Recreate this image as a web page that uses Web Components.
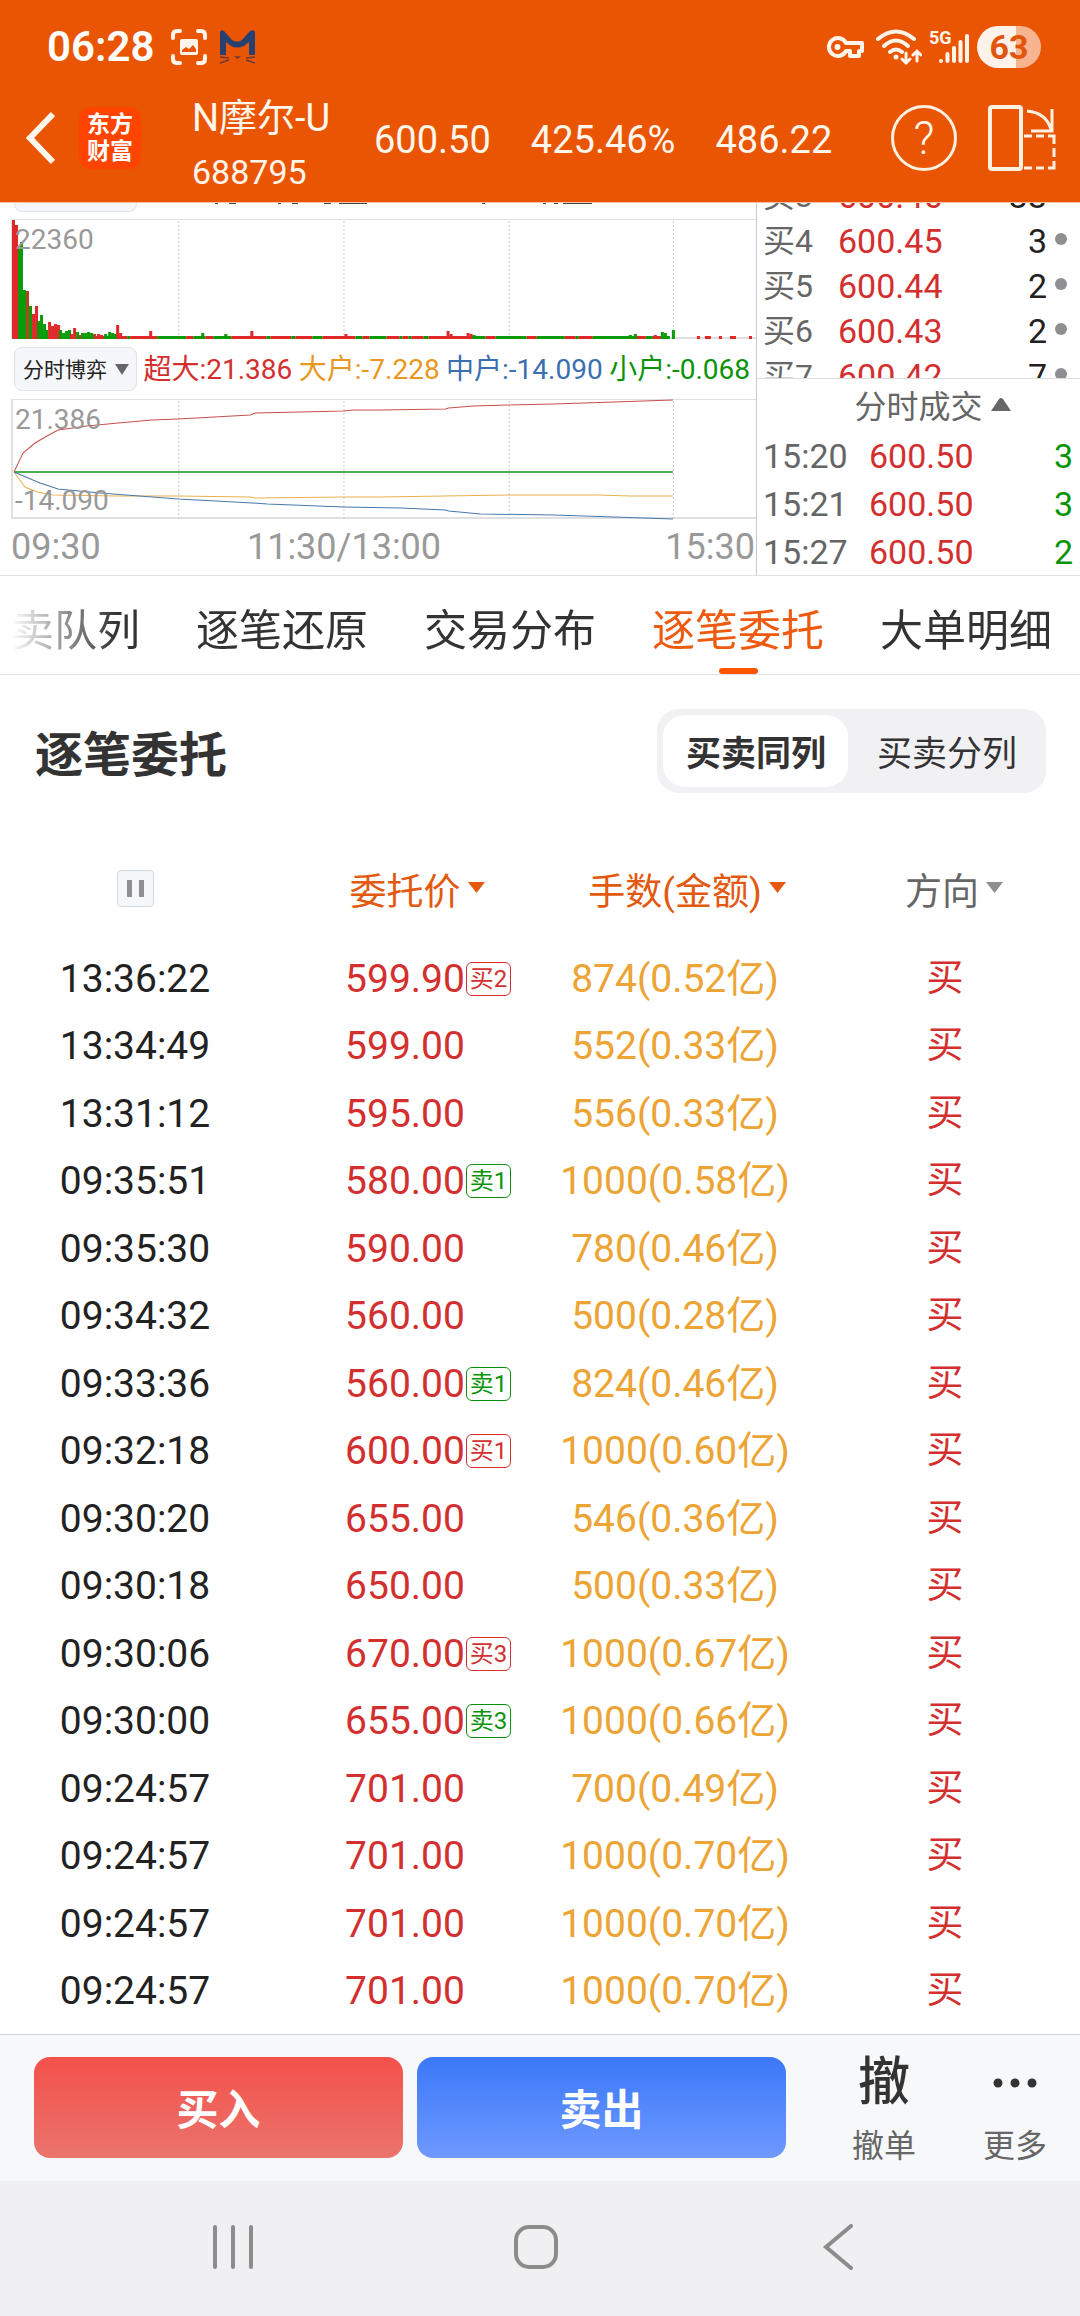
<!DOCTYPE html>
<html lang="zh-CN">
<head>
<meta charset="utf-8">
<meta name="viewport" content="width=device-width, initial-scale=1">
<title>N摩尔-U 688795</title>
<style>
    html, body {
        margin: 0;
    }
    body {
        min-height: 100vh;
        display: flex;
        flex-direction: column;
        background: #fff;
        color: #222;
        font-family: Roboto, "Noto Sans CJK SC", sans-serif;
    }
    order-table {
        flex: 1;
    }
</style>
</head>
<body>
<status-bar time="06:28" battery="63"></status-bar>
<stock-header code="688795">
    N摩尔-U
    <span slot="stats">600.50</span>
    <span slot="stats">425.46%</span>
    <span slot="stats">486.22</span>
</stock-header>
<quote-panel>
    <minute-chart slot="left"></minute-chart>
    <order-book slot="right"></order-book>
</quote-panel>
<tab-strip>
    <tab-item>买卖队列</tab-item>
    <tab-item>逐笔还原</tab-item>
    <tab-item>交易分布</tab-item>
    <tab-item active>逐笔委托</tab-item>
    <tab-item>大单明细</tab-item>
</tab-strip>
<section-head>
    逐笔委托
    <segment-switch slot="action"></segment-switch>
</section-head>
<order-table></order-table>
<trade-bar></trade-bar>
<system-nav></system-nav>

<script>
const RED = "#d32f2f"
const GREEN = "#0a930a"

class BaseElement extends HTMLElement {
    constructor() {
        super()
        this.attachShadow({ mode: 'open' })
        const template = document.createElement('template')
        template.innerHTML = this.render()
        this.shadowRoot.appendChild(template.content.cloneNode(true))
    }
    attr(name) {
        return this.getAttribute(name) || ""
    }
}

class StatusBar extends BaseElement {
    render() {
        return `
            <style>
            :host {
                display: flex;
                align-items: center;
                height: 94px;
                padding: 0 39px 0 47px;
                background: #ea5504;
                color: #fff4ea;
            }
            .time {
                font-size: 42px;
                font-weight: 600;
                line-height: 48px;
                color: #fff;
                margin-right: 17px;
            }
            .shot { margin-right: 12px; }
            .right {
                display: flex;
                align-items: center;
                margin-left: auto;
            }
            .key { margin-right: 12px; }
            .wifi { margin-right: 7px; }
            .signal {
                display: grid;
                width: 40px;
                height: 36px;
                margin-right: 8px;
            }
            .signal > * {
                grid-area: 1 / 1;
            }
            .signal span {
                font-size: 18px;
                font-weight: 700;
                line-height: 18px;
            }
            .battery {
                width: 64px;
                height: 42px;
                border-radius: 21px;
                background: linear-gradient(to right, #fff2ea 61%, #f8b48e 61%);
                color: #e0560c;
                font-size: 34px;
                font-weight: 700;
                line-height: 42px;
                text-align: center;
            }
            svg { display: block; }
            </style>
            <span class="time">${this.attr("time")}</span>
            <svg class="shot" width="36" height="36" viewBox="0 0 36 36" fill="none" stroke="#fff4ea" stroke-width="4" stroke-linecap="round">
                <path d="M2 9V6Q2 2 6 2H9M27 2H30Q34 2 34 6V9M34 27V30Q34 34 30 34H27M9 34H6Q2 34 2 30V27"/>
                <rect x="9" y="10" width="18" height="16" rx="2" fill="#fff4ea" stroke="none"/>
                <path d="M11 23V21L15 18L18 20L22 16L25 20V23Z" fill="#ea5504" stroke="none"/>
            </svg>
            <svg width="36" height="36" viewBox="0 0 36 36">
                <path d="M1 3Q2 0 5 2L13 11Q18 14 23 11L31 2Q35 0 36 3V26H30V13L25 17Q18 20 12 17L7 13V26H1Z" fill="#27406f"/>
                <path d="M1 28L10 29M1 34L10 31M36 28L27 29M36 34L27 31M17 28H20L18.5 29Z" stroke="#6b3a35" stroke-width="1.4" fill="none"/>
            </svg>
            <div class="right">
                <svg class="key" width="38" height="24" viewBox="0 0 38 24" fill="none" stroke="#fff4ea" stroke-width="4" stroke-linejoin="round">
                    <path d="M20 8A9 9 0 1 0 20 16H24V21H33V16H36V8Z"/>
                    <circle cx="11.5" cy="12" r="3" fill="#fff4ea" stroke="none"/>
                </svg>
                <svg class="wifi" width="46" height="36" viewBox="0 0 46 36" fill="none" stroke="#fff4ea" stroke-width="4" stroke-linecap="round">
                    <path d="M2 10Q20 -5 38 10M8 17Q20 6 32 17M14 23Q20 18 26 23"/>
                    <circle cx="20" cy="28" r="2.5" fill="#fff4ea" stroke="none"/>
                    <path d="M30 24V34M26 30L30 34L34 30M41 32V22M37 26L41 22L45 26" stroke-width="3"/>
                </svg>
                <div class="signal">
                    <span>5G</span>
                    <svg width="40" height="36" viewBox="0 0 40 36" stroke="#fff4ea" stroke-width="4" stroke-linecap="round">
                        <path d="M12 32V32.1M18.5 32V25M25 32V19M31.5 32V13M38 32V7"/>
                    </svg>
                </div>
                <div class="battery">${this.attr("battery")}</div>
            </div>
        `
    }
}

class StockHeader extends BaseElement {
    render() {
        return `
            <style>
            :host {
                display: flex;
                align-items: center;
                height: 109px;
                padding: 0 24px 20px 26px;
                box-sizing: border-box;
                background: #ea5504;
                border-bottom: 1px solid #f6c3a4;
                color: #fff6ec;
            }
            button {
                display: block;
                padding: 0;
                border: 0;
                background: none;
                color: inherit;
                font: inherit;
            }
            svg { display: block; }
            .logo {
                width: 62px;
                height: 62px;
                margin: 0 51px 0 24px;
                padding-top: 4px;
                box-sizing: border-box;
                border-radius: 12px;
                background: #ff4400;
                color: #fff;
                font-size: 23px;
                font-weight: 700;
                line-height: 27px;
                text-align: center;
                text-decoration: none;
            }
            .name {
                width: 142px;
                padding-top: 12px;
                white-space: nowrap;
                font-size: 38px;
                line-height: 56px;
            }
            .code {
                font-size: 34px;
                line-height: 52px;
            }
            .stats {
                display: flex;
                gap: 40px;
                margin-left: 40px;
                padding-top: 4px;
                font-size: 38px;
                line-height: 44px;
            }
            .help {
                width: 66px;
                height: 66px;
                margin: 0 31px 0 auto;
                border: 3px solid #fff0e0;
                border-radius: 50%;
                box-sizing: border-box;
                font-size: 46px;
                font-weight: 300;
                line-height: 60px;
            }
            </style>
            <button aria-label="返回">
                <svg width="29" height="54" viewBox="0 0 29 54" fill="none" stroke="#fff6ec" stroke-width="6">
                    <path d="M27 3L4 27L27 51"/>
                </svg>
            </button>
            <a class="logo" href="#">东方<br>财富</a>
            <div class="name">
                <slot></slot>
                <div class="code">${this.attr("code")}</div>
            </div>
            <div class="stats"><slot name="stats"></slot></div>
            <button class="help">?</button>
            <button aria-label="横屏">
                <svg width="68" height="66" viewBox="0 0 68 66" fill="none" stroke="#fff0e0" stroke-width="3">
                    <rect x="2" y="2" width="31" height="62" rx="2" stroke-width="4"/>
                    <path d="M39 6Q59 8 63 25M64 4V26H43"/>
                    <path d="M36 31H44M48 31H56M60 31H66V39M66 43V52M66 56V63H60M56 63H48M44 63H36"/>
                </svg>
            </button>
        `
    }
}

class QuotePanel extends BaseElement {
    render() {
        return `
            <style>
            :host {
                display: grid;
                grid-template-columns: 7fr 3fr;
                height: 372px;
                border-bottom: 1px solid #e2e2e2;
                overflow: hidden;
            }
            </style>
            <slot name="left"></slot>
            <slot name="right"></slot>
        `
    }
}

// single volume bars: x, height, colour
const spikes = [
    [1, 119, "r"], [4, 114, "r"], [7, 92, "g"], [9, 97, "g"], [12, 49, "g"], [15, 48, "d"],
    [18, 33, "g"], [21, 25, "r"], [24, 33, "r"], [26, 18, "g"], [29, 24, "g"], [32, 15, "g"],
    [34, 9, "g"], [37, 17, "r"], [40, 13, "r"], [43, 15, "r"], [46, 14, "r"], [48, 9, "g"],
    [51, 6, "g"], [54, 8, "g"], [57, 9, "g"], [59, 5, "r"], [62, 11, "r"], [65, 7, "g"],
    [68, 4, "d"], [70, 6, "g"], [73, 6, "g"], [76, 7, "g"], [79, 6, "g"], [82, 5, "d"],
    [86, 5, "r"], [89, 4, "r"], [93, 5, "g"], [97, 7, "g"], [100, 6, "g"], [103, 5, "g"],
    [105, 14, "r"], [108, 6, "r"], [138, 8, "r"], [190, 6, "g"], [239, 8, "r"], [333, 5, "r"],
    [213, 5, "g"], [435, 8, "r"], [438, 5, "r"], [455, 6, "r"], [458, 5, "r"], [461, 4, "g"],
    [617, 4, "g"], [622, 5, "g"], [642, 4, "r"], [649, 7, "g"], [652, 6, "g"], [660, 9, "g"]
]
// low volume: from, to, colour
const runs = [
    [67, 93, "d"], [93, 108, "g"], [108, 116, "r"], [116, 119, "g"], [119, 146, "r"], [146, 175, "g"],
    [175, 182, "r"], [182, 194, "g"], [194, 202, "r"], [202, 220, "g"], [220, 255, "r"], [255, 259, "g"],
    [259, 280, "r"], [280, 284, "g"], [284, 301, "r"], [301, 311, "g"], [311, 344, "r"], [344, 351, "g"],
    [351, 358, "r"], [358, 375, "g"], [375, 388, "r"], [388, 391, "g"], [391, 397, "r"], [397, 400, "g"],
    [400, 412, "r"], [412, 417, "g"], [417, 459, "r"], [459, 474, "g"], [474, 484, "r"], [484, 515, "g"],
    [515, 525, "r"], [525, 553, "g"], [553, 564, "r"], [564, 567, "g"], [567, 581, "r"], [581, 624, "g"],
    [624, 634, "r"], [634, 641, "g"], [641, 649, "r"], [649, 658, "g"], [685, 688, "r"], [693, 699, "r"],
    [707, 710, "r"], [718, 724, "r"], [737, 740, "r"]
]
const barColors = { r: "#e02828", g: "#0a9a0a", d: "#b04420" }

class MinuteChart extends BaseElement {
    render() {
        const low = runs.map(([a, b, c]) => `<rect x="${a}" y="116" width="${b - a}" height="3" fill="${barColors[c]}"/>`).join("")
        const bars = spikes.map(([x, h, c]) => `<rect x="${x}" y="${119 - h}" width="3" height="${h}" fill="${barColors[c]}"/>`).join("")
        const grid = `<path d="M167.5 1V119M332.5 1V119M497.5 1V119M661.5 1V119" stroke="#ccc" stroke-dasharray="2 2"/>`
        return `
            <style>
            :host {
                display: flex;
                flex-direction: column;
                min-width: 0;
            }
            .cut {
                height: 16px;
                padding-left: 14px;
                display: flex;
            }
            .cut div {
                width: 121px;
                height: 8px;
                border: 1px solid #dfe3e8;
                border-top: 0;
                border-radius: 0 0 8px 8px;
                background: #f6f7fa;
            }
            .cut svg { margin-left: 78px; }
            .chart {
                position: relative;
                height: 120px;
                margin-left: 11px;
                box-sizing: border-box;
                border: 1px solid #e0e0e0;
                border-right: 0;
                border-left-width: 2px;
                border-bottom-width: 2px;
            }
            .chart svg {
                display: block;
                width: 100%;
                height: 119px;
                overflow: visible;
            }
            .label {
                position: absolute;
                left: 2px;
                color: #999;
                font-size: 28px;
                line-height: 32px;
            }
            .top { top: 4px; }
            .bottom { bottom: 0; }
            .legend {
                display: flex;
                align-items: center;
                justify-content: space-between;
                height: 60px;
                padding: 0 6px 0 14px;
                font-size: 28px;
                line-height: 44px;
                white-space: nowrap;
            }
            .legend span { padding-top: 2px; }
            .drop {
                display: grid;
                align-items: center;
                justify-items: end;
            }
            .drop > * { grid-area: 1 / 1; }
            .drop svg {
                margin-right: 8px;
                pointer-events: none;
                z-index: 1;
            }
            select {
                width: 123px;
                height: 44px;
                padding: 0 0 0 8px;
                box-sizing: border-box;
                border: 1px solid #dfe3e8;
                border-radius: 8px;
                appearance: none;
                background: #f6f7fa;
                color: #222;
                font: inherit;
                font-size: 21px;
            }
            .axis {
                display: flex;
                justify-content: space-between;
                padding: 0 1px 0 11px;
                color: #999;
                font-size: 36px;
                line-height: 56px;
            }
            .axis :nth-child(2) { margin-right: 78px; }
            </style>
            <div class="cut">
                <div></div>
                <svg width="400" height="2" stroke="#444" stroke-width="2">
                    <path d="M0 0H3M14 0H21M63 0H66M77 0H83M109 0H116M124 0H152M267 0H270M328 0H331M339 0H343M348 0H377"/>
                </svg>
            </div>
            <div class="chart">
                <svg viewBox="2 0 742 119" preserveAspectRatio="none">${grid}${low}${bars}</svg>
                <span class="label top">22360</span>
            </div>
            <div class="legend">
                <div class="drop">
                    <select aria-label="指标"><option>分时博弈</option></select>
                    <svg width="14" height="11"><path d="M0 0H14L7 11Z" fill="#666"/></svg>
                </div>
                <span style="color: ${RED}">超大:21.386</span>
                <span style="color: #e8981e">大户:-7.228</span>
                <span style="color: #3a6fb0">中户:-14.090</span>
                <span style="color: ${GREEN}">小户:-0.068</span>
            </div>
            <div class="chart">
                <svg viewBox="2 0 742 119" preserveAspectRatio="none" fill="none">
                    ${grid}
                    <path d="M3 72H661" stroke="#4caf50" stroke-width="2"/>
                    <polyline stroke="#e8b050" points="3,72 14,87 26,92 42,95 107,96 167,96 239,97 244,98 332,97 369,97 496,95 586,95 619,96 661,96"/>
                    <polyline stroke="#4a78a8" points="3,72 29,83 47,89 89,93 167,99 241,103 256,104 332,107 389,108 434,110 437,111 469,114 542,115 602,117 661,119"/>
                    <polyline stroke="#c8504c" points="3,72 12,53 24,43 36,36 47,30 76,26 107,23 141,20 167,19 239,15 244,13 332,11 342,10 369,10 434,9 437,8 462,6 496,5 542,4 602,2 661,0"/>
                </svg>
                <span class="label top">21.386</span>
                <span class="label bottom">-14.090</span>
            </div>
            <div class="axis"><span>09:30</span><span>11:30/13:00</span><span>15:30</span></div>
        `
    }
}

class OrderBook extends BaseElement {
    render() {
        const bids = [["买3", "600.46", "33"], ["买4", "600.45", "3"], ["买5", "600.44", "2"], ["买6", "600.43", "2"], ["买7", "600.42", "7"]]
        const deals = [["15:20", "600.50", "3"], ["15:21", "600.50", "3"], ["15:27", "600.50", "2"]]
        return `
            <style>
            :host {
                display: block;
                border-left: 1px solid #c8c8c8;
                font-size: 34px;
                min-width: 0;
            }
            .bids {
                height: 175px;
                overflow: hidden;
                border-bottom: 1px solid #ddd;
            }
            table {
                width: 100%;
                border-collapse: collapse;
                table-layout: fixed;
            }
            .bids table { margin-top: -29px; }
            td {
                padding: 0;
                line-height: 45px;
                height: 45px;
            }
            .deals td {
                line-height: 48px;
                height: 48px;
            }
            td:first-child {
                width: 75px;
                padding-left: 6px;
                color: #666;
            }
            .bids td:first-child { font-size: 32px; }
            .deals td:first-child { width: 106px; }
            td:nth-child(2) { color: ${RED}; width: 110px; }
            td:last-child { text-align: right; }
            .bids td:last-child { padding-right: 13px; }
            .deals td:last-child { padding-right: 7px; color: ${GREEN}; }
            i {
                display: inline-block;
                width: 12px;
                height: 12px;
                margin-left: 8px;
                border-radius: 50%;
                background: #8e8e93;
                vertical-align: 8px;
            }
            button {
                display: flex;
                align-items: center;
                justify-content: center;
                gap: 8px;
                width: 100%;
                height: 53px;
                padding: 0 0 4px 28px;
                border: 0;
                background: none;
                color: #666;
                font: inherit;
                font-size: 32px;
            }
            </style>
            <div class="bids">
                <table>${bids.map(([k, p, n]) => `<tr><td>${k}</td><td>${p}</td><td>${n}<i></i></td></tr>`).join("")}</table>
            </div>
            <button>分时成交 <svg width="20" height="14"><path d="M0 14L8 2Q10 0 12 2L20 14Z" fill="#666"/></svg></button>
            <table class="deals">${deals.map(([t, p, n]) => `<tr><td>${t}</td><td>${p}</td><td>${n}</td></tr>`).join("")}</table>
        `
    }
}

class TabStrip extends BaseElement {
    render() {
        return `
            <style>
            :host {
                display: block;
                border-bottom: 1px solid #e2e2e2;
                overflow: hidden;
            }
            nav {
                display: flex;
                justify-content: flex-end;
                gap: 56px;
                height: 98px;
                padding-right: 28px;
                -webkit-mask-image: linear-gradient(to right, transparent 10px, #000 116px);
                mask-image: linear-gradient(to right, transparent 10px, #000 116px);
            }
            </style>
            <nav><slot></slot></nav>
        `
    }
}

class TabItem extends BaseElement {
    render() {
        return `
            <style>
            :host {
                display: block;
                flex: none;
            }
            button {
                position: relative;
                display: block;
                height: 98px;
                padding: 12px 0 0;
                border: 0;
                background: none;
                color: #333;
                font: inherit;
                font-size: 43px;
                line-height: 64px;
            }
            :host([active]) button { color: #ee5a10; }
            :host([active]) button::after {
                content: "";
                position: absolute;
                left: 50%;
                bottom: 0;
                width: 39px;
                height: 6px;
                margin-left: -19px;
                border-radius: 3px;
                background: #ff5500;
            }
            </style>
            <button><slot></slot></button>
        `
    }
}

class SectionHead extends BaseElement {
    render() {
        return `
            <style>
            :host {
                display: flex;
                align-items: center;
                justify-content: space-between;
                padding: 34px 34px 50px 35px;
            }
            h2 {
                margin: 0;
                padding-top: 10px;
                color: #333;
                font-size: 48px;
                font-weight: 700;
                line-height: 72px;
            }
            </style>
            <h2><slot></slot></h2>
            <slot name="action"></slot>
        `
    }
}

class SegmentSwitch extends BaseElement {
    render() {
        return `
            <style>
            :host {
                display: flex;
                padding: 6px;
                border-radius: 22px;
                background: #f1f1f4;
            }
            label {
                height: 72px;
                padding: 0 22px 0 23px;
                border-radius: 22px;
                color: #333;
                font-size: 35px;
                line-height: 80px;
            }
            label + label { padding: 0 23px 0 29px; }
            label:has(:checked) {
                background: #fff;
                font-weight: 700;
            }
            input {
                position: absolute;
                opacity: 0;
                pointer-events: none;
            }
            </style>
            <label><input type="radio" name="mode" checked>买卖同列</label>
            <label><input type="radio" name="mode">买卖分列</label>
        `
    }
}

const orders = [
    ["13:36:22", "599.90", "874(0.52亿)", "买2"],
    ["13:34:49", "599.00", "552(0.33亿)"],
    ["13:31:12", "595.00", "556(0.33亿)"],
    ["09:35:51", "580.00", "1000(0.58亿)", "卖1"],
    ["09:35:30", "590.00", "780(0.46亿)"],
    ["09:34:32", "560.00", "500(0.28亿)"],
    ["09:33:36", "560.00", "824(0.46亿)", "卖1"],
    ["09:32:18", "600.00", "1000(0.60亿)", "买1"],
    ["09:30:20", "655.00", "546(0.36亿)"],
    ["09:30:18", "650.00", "500(0.33亿)"],
    ["09:30:06", "670.00", "1000(0.67亿)", "买3"],
    ["09:30:00", "655.00", "1000(0.66亿)", "卖3"],
    ["09:24:57", "701.00", "700(0.49亿)"],
    ["09:24:57", "701.00", "1000(0.70亿)"],
    ["09:24:57", "701.00", "1000(0.70亿)"],
    ["09:24:57", "701.00", "1000(0.70亿)"]
]

class OrderTable extends BaseElement {
    render() {
        const arrow = `<svg width="17" height="11"><path d="M0 0H17L8.5 11Z" fill="currentColor"/></svg>`
        const row = ([time, price, amount, level]) => `
            <tr>
                <td>${time}</td>
                <td class="price"><span class="anchor">${price}${level ? `<level-badge>${level}</level-badge>` : ""}</span></td>
                <td class="amount">${amount}</td>
                <td class="side">买</td>
            </tr>`
        return `
            <style>
            :host { display: block; }
            table {
                width: 100%;
                border-collapse: collapse;
                table-layout: fixed;
            }
            th, td {
                padding: 0;
                text-align: center;
                font-weight: 400;
                white-space: nowrap;
            }
            th {
                height: 90px;
                padding-bottom: 12px;
                font-size: 37px;
                line-height: 54px;
            }
            td {
                height: 67px;
                font-size: 39px;
                line-height: 56px;
            }
            tr:nth-child(even) td { height: 68px; }
            th button {
                position: relative;
                padding: 10px 0 0;
                border: 0;
                background: none;
                color: #666;
                font: inherit;
            }
            th .on { color: #e2590f; }
            th button svg {
                position: absolute;
                left: 100%;
                top: 26px;
                margin-left: 7px;
            }
            th .gray { margin-right: 6px; }
            .gray svg { color: #8e8e93; }
            th .pause {
                display: block;
                width: 37px;
                height: 37px;
                margin: 0 auto;
                padding: 0;
                border: 1px solid #d3d9e0;
                border-radius: 4px;
                background: #f6f7fa;
            }
            th .pause svg {
                position: static;
                display: block;
                margin: 0;
            }
            .anchor { position: relative; }
            .price, .side { color: ${RED}; }
            .side { font-size: 37px; }
            .amount { color: #eca435; }
            level-badge {
                position: absolute;
                left: 100%;
                top: 6px;
                margin-left: 1px;
            }
            </style>
            <table>
                <thead>
                    <tr>
                        <th><button class="pause" aria-label="暂停"><svg width="35" height="35"><path d="M9 9H14V26H9ZM21 9H26V26H21Z" fill="#8e8e93"/></svg></button></th>
                        <th><button class="on">委托价${arrow}</button></th>
                        <th><button class="on">手数(金额)${arrow}</button></th>
                        <th><button class="gray">方向${arrow}</button></th>
                    </tr>
                </thead>
                <tbody>${orders.map(row).join("")}</tbody>
            </table>
        `
    }
}

class LevelBadge extends BaseElement {
    render() {
        return `
            <style>
            :host {
                display: block;
                width: 45px;
                height: 34px;
                box-sizing: border-box;
                border: 1px solid currentColor;
                border-radius: 6px;
                color: ${RED};
                font-size: 24px;
                line-height: 32px;
                text-align: center;
            }
            :host(.sell) { color: ${GREEN}; }
            </style>
            <slot></slot>
        `
    }
    connectedCallback() {
        this.classList.toggle("sell", this.textContent.startsWith("卖"))
    }
}

class TradeBar extends BaseElement {
    render() {
        return `
            <style>
            :host {
                display: flex;
                align-items: flex-start;
                height: 124px;
                padding: 22px 24px 0 34px;
                border-top: 1px solid #d3d6d9;
                background: #f7f8fa;
            }
            button {
                padding: 0;
                border: 0;
                background: none;
                font: inherit;
            }
            .trade {
                flex: 1;
                height: 101px;
                margin-right: 14px;
                padding-top: 6px;
                border-radius: 16px;
                color: #fff;
                font-size: 42px;
                font-weight: 700;
                line-height: 64px;
            }
            .buy { background: linear-gradient(#f4504a, #ea746d); }
            .sell { background: linear-gradient(#3b78f8, #6e99ff); }
            .small {
                display: flex;
                flex-direction: column;
                align-items: center;
                width: 82px;
                color: #666;
                font-size: 32px;
                line-height: 46px;
            }
            .cancel { margin: 0 49px 0 43px; }
            .icon {
                display: flex;
                align-items: center;
                height: 52px;
                margin-bottom: 14px;
                color: #333;
                font-size: 52px;
                font-weight: 500;
            }
            </style>
            <button class="trade buy">买入</button>
            <button class="trade sell">卖出</button>
            <button class="small cancel"><span class="icon">撤</span>撤单</button>
            <button class="small more">
                <span class="icon"><svg width="44" height="10" fill="#333"><circle cx="5" cy="5" r="4.5"/><circle cx="22" cy="5" r="4.5"/><circle cx="39" cy="5" r="4.5"/></svg></span>更多
            </button>
        `
    }
}

class SystemNav extends BaseElement {
    render() {
        return `
            <style>
            :host {
                display: flex;
                align-items: center;
                justify-content: space-between;
                height: 135px;
                box-sizing: border-box;
                padding: 0 219px 4px 210px;
                background: #f0f0f2;
            }
            button {
                flex: none;
                padding: 0;
                border: 0;
                background: none;
            }
            svg {
                display: block;
                fill: none;
                stroke: #8c8c8c;
                stroke-width: 4;
                stroke-linecap: round;
            }
            </style>
            <button aria-label="最近"><svg width="46" height="46"><path d="M5 3V43M23 3V43M41 3V43"/></svg></button>
            <button aria-label="主页"><svg width="46" height="46"><rect x="3" y="3" width="40" height="40" rx="13"/></svg></button>
            <button aria-label="返回"><svg width="46" height="46"><path d="M36 2L11 23L36 44"/></svg></button>
        `
    }
}

customElements.define('level-badge', LevelBadge)
customElements.define('status-bar', StatusBar)
customElements.define('stock-header', StockHeader)
customElements.define('quote-panel', QuotePanel)
customElements.define('minute-chart', MinuteChart)
customElements.define('order-book', OrderBook)
customElements.define('tab-strip', TabStrip)
customElements.define('tab-item', TabItem)
customElements.define('section-head', SectionHead)
customElements.define('segment-switch', SegmentSwitch)
customElements.define('order-table', OrderTable)
customElements.define('trade-bar', TradeBar)
customElements.define('system-nav', SystemNav)
</script>
</body>
</html>
